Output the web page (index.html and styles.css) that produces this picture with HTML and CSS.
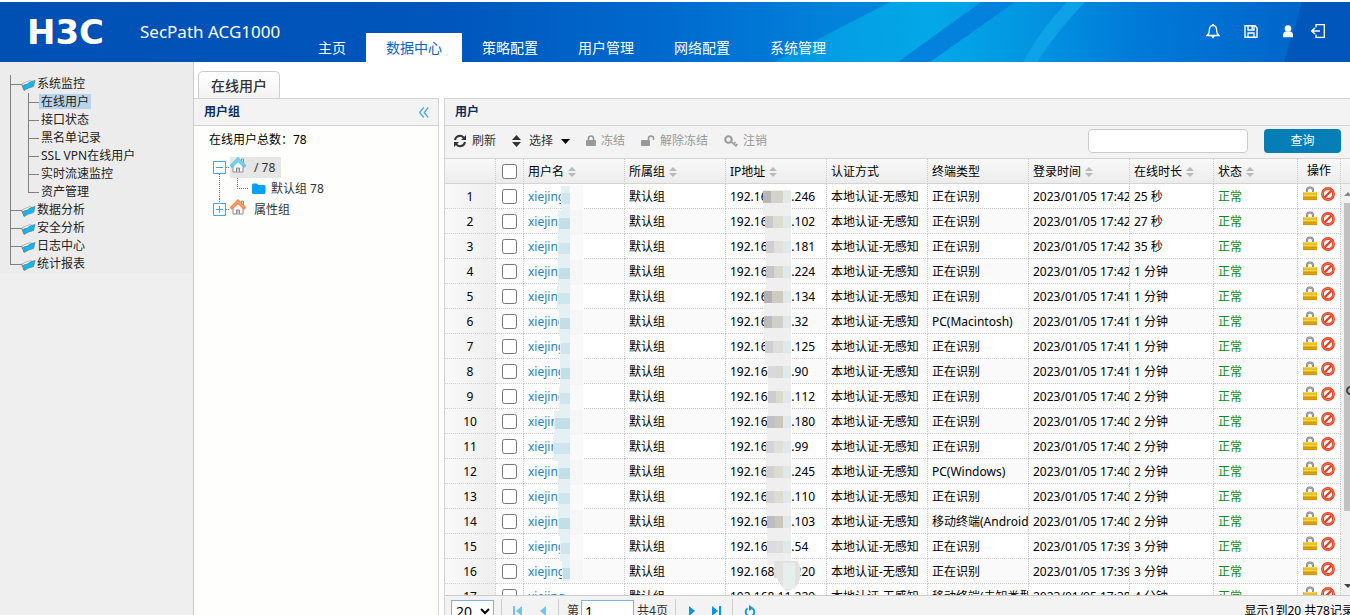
FILE: index.html
```html
<!DOCTYPE html>
<html lang="zh">
<head>
    <meta charset="UTF-8">
    <meta name="viewport" content="width=device-width, initial-scale=1.0">
    <title>SecPath ACG1000</title>
    <link rel="stylesheet" href="styles.css">
</head>
<body>

<!-- 公用图标 -->
<svg class="defs" width="0" height="0">
    <linearGradient id="head" x1="0" x2="1" y1="0" y2="0">
        <stop offset="0" stop-color="#0050b4"/><stop offset=".33" stop-color="#0056bc"/><stop offset=".5" stop-color="#006bcf"/><stop offset=".63" stop-color="#0284dc"/><stop offset="1" stop-color="#0284dc"/>
    </linearGradient>
    <linearGradient id="light" gradientUnits="userSpaceOnUse" x1="780" x2="1290" y1="50" y2="20">
        <stop offset="0" stop-color="#0498e2"/><stop offset=".3" stop-color="#03a8e8"/><stop offset=".5" stop-color="#0394e1"/><stop offset=".7" stop-color="#007ad8"/><stop offset="1" stop-color="#0066ca"/>
    </linearGradient>
    <symbol id="i-folder" viewBox="0 0 15 13">
        <path d="M0.500 6L9 2.500l2 1-8 5z" fill="#fff" stroke="#9aa5ab" stroke-width=".8"/>
        <path d="M0.500 6L3 12" stroke="#777"/>
        <path d="M2.500 7l4-1 1.500-1.500L14 2.500l-1.500 6-5 1.500L3 12.500z" fill="#10b8f0" stroke="#5b8794" stroke-width=".8"/>
    </symbol>
    <symbol id="i-home" viewBox="0 0 16 16">
        <path d="M3 8v7h10V8L8 3z" fill="#fff" stroke="#8c8c8c"/>
        <path d="M6.500 15v-4h3v4" fill="#ccc" stroke="#8c8c8c"/>
        <path d="M11.500 4V2h2v4" fill="#fff" stroke="#8c8c8c"/>
        <path d="M2 8.500l6-6 6 6" fill="none" stroke="currentColor" stroke-width="3.600" stroke-linecap="square"/>
        <path d="M2 8.500l6-6 6 6" fill="none" stroke="#fff" stroke-opacity=".4" stroke-width="1"/>
    </symbol>
    <symbol id="i-lock" viewBox="0 0 14 15">
        <path d="M4 8V4.500a3 3 0 0 1 6 0V8" fill="none" stroke="#777" stroke-width="2"/>
        <path d="M4 7V4.500a3 3 0 0 1 6 0V7" fill="none" stroke="#ccc" stroke-width=".7"/>
        <path d="M0 6h14v8H0z" fill="#f5c623"/>
        <path d="M0 11h14v3H0z" fill="#dfa30a"/>
        <path d="M1 7h12M1 9h12" stroke="#ffe96b"/>
        <path d="M0 8h14M0 11h14M0 13.700h14" stroke="#bd8a12" stroke-width=".6"/>
    </symbol>
    <symbol id="i-ban" viewBox="0 0 14 14">
        <circle cx="7" cy="7" r="5.500" fill="#fff" stroke="#e8391c" stroke-width="2.800"/>
        <path d="M3.500 10.500l7-7" stroke="#e8391c" stroke-width="2.200"/>
        <circle cx="7" cy="7" r="5.500" fill="none" stroke="#ff8a70" stroke-width=".8"/>
    </symbol>
    <symbol id="i-sort" viewBox="0 0 8 10">
        <path d="M0 4l4-4 4 4zM0 6h8l-4 4z" fill="#b9b9b9"/>
    </symbol>
</svg>

<header class="topbar">
    <svg class="topbar-bg" viewBox="0 0 1350 60" preserveAspectRatio="none">
        <path d="M0 0h1350v60H0z" fill="url(#head)"/>
        <path d="M774 60L890 0h460v60z" fill="url(#light)"/>
        <path d="M898 60L981 0h34L930 60z" fill="#0282dc"/>
        <path d="M1023 60Q1040 28 1067 0h18Q1058 28 1037 60z" fill="#12a6ea" fill-opacity=".8"/>
        <path d="M1284 60L1302 0h48v60z" fill="#0056bb"/>
    </svg>
    <a class="logo" href="#">H3C</a>
    <span class="product">SecPath ACG1000</span>
    <nav class="main-nav">
        <a href="#">主页</a>
        <a href="#" class="active">数据中心</a>
        <a href="#">策略配置</a>
        <a href="#">用户管理</a>
        <a href="#">网络配置</a>
        <a href="#">系统管理</a>
    </nav>
    <div class="tools">
        <button aria-label="告警"><svg width="14" height="15" viewBox="0 0 14 15"><path d="M7 1.500c-3 0-3.700 2.500-3.700 5.500 0 2.500-1 3.500-2.300 4.500h12c-1.300-1-2.300-2-2.300-4.500 0-3-.7-5.500-3.700-5.500z" fill="none" stroke="#fff" stroke-width="1.300"/><path d="M5 12h4l-2 2.500zM6 0h2v2H6z" fill="#fff"/></svg></button>
        <button aria-label="保存"><svg width="14" height="15" viewBox="0 0 14 15"><path d="M1 1.700h10l2 2v9.600H1z" fill="none" stroke="#fff" stroke-width="1.400"/><path d="M4 2v4h6V2M4 13V9h6v4" fill="none" stroke="#fff" stroke-width="1.300"/><path d="M7.500 2h1.500v3H7.500z" fill="#fff"/></svg></button>
        <button aria-label="用户"><svg width="12" height="15" viewBox="0 0 12 15"><circle cx="6" cy="4.500" r="3.300" fill="#fff"/><path d="M1 13.300V11c0-2 1.500-3.500 3-3.500h4c1.500 0 3 1.500 3 3.500v2.300z" fill="#fff"/></svg></button>
        <button aria-label="退出"><svg width="16" height="16" viewBox="0 0 16 16"><path d="M6 4.500V1.700h8.300v12.600H6v-2.800" fill="none" stroke="#fff" stroke-width="1.300"/><path d="M10 8H2M5 5L1.800 8 5 11" fill="none" stroke="#fff" stroke-width="1.600"/></svg></button>
    </div>
</header>

<div class="layout">
    <aside class="sidebar">
        <ul class="menu">
            <li><a href="#"><svg width="15" height="13"><use href="#i-folder"/></svg>系统监控</a>
                <ul class="submenu">
                    <li><a href="#" class="selected">在线用户</a></li>
                    <li><a href="#">接口状态</a></li>
                    <li><a href="#">黑名单记录</a></li>
                    <li><a href="#">SSL VPN在线用户</a></li>
                    <li><a href="#">实时流速监控</a></li>
                    <li><a href="#">资产管理</a></li>
                </ul>
            </li>
            <li><a href="#"><svg width="15" height="13"><use href="#i-folder"/></svg>数据分析</a></li>
            <li><a href="#"><svg width="15" height="13"><use href="#i-folder"/></svg>安全分析</a></li>
            <li><a href="#"><svg width="15" height="13"><use href="#i-folder"/></svg>日志中心</a></li>
            <li><a href="#"><svg width="15" height="13"><use href="#i-folder"/></svg>统计报表</a></li>
        </ul>
    </aside>

    <main class="main">
        <div class="tabs"><a href="#" class="tab">在线用户</a></div>
        <div class="panels">
            <section class="groups">
                <div class="panel-title">用户组
                    <button class="collapse" aria-label="收起"><svg width="10" height="11" viewBox="0 0 10 11"><path d="M4.700 0.500l-4 5 4 5M9.200 0.500l-4 5 4 5" fill="none" stroke="#4aaee2" stroke-width="1.300"/></svg></button>
                </div>
                <p class="total">在线用户总数：78</p>
                <ul class="tree">
                    <li>
                        <svg width="17" height="21"><path d="M.5 4.500h12v12H.5zM3 10.500h7" fill="none" stroke="#3aa9e4"/><path d="M13 10.500h4M6.500 17v4" stroke="#3c8dbb" stroke-dasharray="1 1"/></svg>
                        <a href="#" class="node selected"><svg class="home-blue" width="16" height="16"><use href="#i-home"/></svg><span>/ 78</span></a>
                    </li>
                    <li>
                        <svg width="39" height="21"><path d="M6.500 0v21M24.500 0v10.500h11" fill="none" stroke="#3c8dbb" stroke-dasharray="1 1"/></svg>
                        <a href="#" class="node leaf"><svg width="14" height="12" viewBox="0 0 14 12"><path d="M0 2q0-1.500 1.500-1.500H5L6.500 2H12q1.500 0 1.500 1.500v6q0 1.500-1.500 1.500H1.500Q0 11 0 9.500z" fill="#06a0f5"/></svg><span>默认组 78</span></a>
                    </li>
                    <li>
                        <svg width="17" height="21"><path d="M.5 4.500h12v12H.5zM3 10.500h7M6.500 7v7" fill="none" stroke="#3aa9e4"/><path d="M13 10.500h4M6.500 0v4" stroke="#3c8dbb" stroke-dasharray="1 1"/></svg>
                        <a href="#" class="node"><svg class="home-orange" width="16" height="16"><use href="#i-home"/></svg><span>属性组</span></a>
                    </li>
                </ul>
            </section>

            <section class="users">
                <div class="panel-title">用户</div>
                <div class="toolbar">
                    <button><svg width="14" height="14" viewBox="0 0 14 14"><path d="M2 6a5 5 0 0 1 9-2M12 8a5 5 0 0 1-9 2" fill="none" stroke="#333" stroke-width="2"/><path d="M13 1v5H8zM1 13V8h5z" fill="#333"/></svg>刷新</button>
                    <button><svg width="9" height="12" viewBox="0 0 9 12"><path d="M0 5l4.500-5L9 5zM0 7h9l-4.500 5z" fill="#333"/></svg><span class="pick">选择</span><svg width="9" height="5" viewBox="0 0 9 5"><path d="M0 0h9L4.500 5z" fill="#000"/></svg></button>
                    <button disabled><svg width="10" height="12" viewBox="0 0 10 12"><path d="M2.500 6V3.500a2.500 2.500 0 0 1 5 0V6" fill="none" stroke="#999" stroke-width="1.600"/><rect y="5" width="10" height="6" rx="1" fill="#999"/></svg>冻结</button>
                    <button disabled><svg width="14" height="12" viewBox="0 0 14 12"><path d="M7.500 6V3.500a2.500 2.500 0 0 1 5 0V5" fill="none" stroke="#999" stroke-width="1.600"/><rect y="5" width="9" height="6" rx="1" fill="#999"/></svg>解除冻结</button>
                    <button disabled><svg width="14" height="13" viewBox="0 0 14 13"><circle cx="4.500" cy="4.500" r="3.300" fill="none" stroke="#999" stroke-width="2"/><path d="M7 6.500l5.500 5M9.500 9l2-2M11.500 11l2-2" stroke="#999" stroke-width="1.600"/></svg>注销</button>
                    <input type="text" class="search" aria-label="查询内容">
                    <button class="search-btn">查询</button>
                </div>

                <div class="grid">
                    <table>
                        <colgroup>
                            <col class="c-num"><col class="c-check"><col class="c-text"><col class="c-text"><col class="c-text"><col class="c-text"><col class="c-text"><col class="c-text"><col class="c-short"><col class="c-short"><col class="c-op"><col>
                        </colgroup>
                        <thead>
                            <tr>
                                <th></th>
                                <th><input type="checkbox" aria-label="全选"></th>
                                <th>用户名<svg width="8" height="10"><use href="#i-sort"/></svg></th>
                                <th>所属组<svg width="8" height="10"><use href="#i-sort"/></svg></th>
                                <th>IP地址<svg width="8" height="10"><use href="#i-sort"/></svg></th>
                                <th>认证方式</th>
                                <th>终端类型</th>
                                <th>登录时间<svg width="8" height="10"><use href="#i-sort"/></svg></th>
                                <th>在线时长<svg width="8" height="10"><use href="#i-sort"/></svg></th>
                                <th>状态<svg width="8" height="10"><use href="#i-sort"/></svg></th>
                                <th class="op">操作</th>
                                <th></th>
                            </tr>
                        </thead>
                        <tbody id="rows"></tbody>
                    </table>
                    <!-- 用户名和IP打码 -->
                    <svg class="mask" id="mask" width="400" height="420"></svg>
                    <div class="scrollbar">
                        <svg width="9" height="19" viewBox="0 0 9 19"><path d="M3 12l4-4 4 4z" fill="#888"/></svg>
                        <div class="thumb"></div>
                        <svg width="9" height="16" viewBox="0 0 9 16"><path d="M3 5h8l-4 4z" fill="#444"/></svg>
                    </div>
                    <span class="handle"></span>
                </div>

                <div class="pager">
                    <div class="pager-row">
                        <select aria-label="每页条数"><option>20</option></select>
                        <i></i>
                        <button disabled aria-label="首页"><svg width="9" height="10" viewBox="0 0 9 10"><path d="M0 0h2v10H0zM9 0v10L3 5z" fill="#72c3f0"/></svg></button>
                        <button disabled aria-label="上一页"><svg width="9" height="10" viewBox="0 0 9 10"><path d="M8 0v10L2 5z" fill="#72c3f0"/></svg></button>
                        <i></i>
                        <label for="page">第</label><input type="text" id="page" value="1"><span>共4页</span>
                        <i></i>
                        <button aria-label="下一页"><svg width="9" height="10" viewBox="0 0 9 10"><path d="M2 0v10l6-5z" fill="#0596e6"/></svg></button>
                        <button aria-label="末页"><svg width="9" height="10" viewBox="0 0 9 10"><path d="M7 0h2v10H7zM0 0v10l6-5z" fill="#0596e6"/></svg></button>
                        <i></i>
                        <button aria-label="刷新"><svg width="12" height="13" viewBox="0 0 12 13"><path d="M3.500 3.500a4.300 4.300 0 1 0 5 0" fill="none" stroke="#0596e6" stroke-width="1.800"/><path d="M5 0l4.500 3L5 6z" fill="#0596e6"/></svg></button>
                        <span class="info">显示1到20 共78记录</span>
                    </div>
                </div>
            </section>
        </div>
    </main>
</div>

<script src="script.js"></script>
</body>
</html>
```
FILE: styles.css
```css
* {
    box-sizing: border-box;
}
html, body {
    height: 100%;
    overflow: hidden;
}
body {
    margin: 0;
    padding-top: 2px;
    display: flex;
    flex-direction: column;
    background: #fff;
    font: 12px/18px "Noto Sans", "Noto Sans CJK SC", sans-serif;
    color: #000;
}
a {
    color: inherit;
    text-decoration: none;
}
ul {
    list-style: none;
    margin: 0;
    padding: 0;
}
button, input, select {
    font: inherit;
    color: inherit;
}
button {
    border: none;
    background: none;
    padding: 0;
    display: flex;
    align-items: center;
}
svg {
    flex: none;
}
.defs {
    position: absolute;
}

/* 顶部 */
.topbar {
    position: relative;
    z-index: 0;
    flex: 0 0 60px;
    display: flex;
    color: #fff;
    background: #0050b4;
}
.topbar-bg {
    position: absolute;
    width: 100%;
    height: 100%;
    z-index: -1;
}
.logo {
    width: 113px;
    margin-left: 27px;
    font: bold 34px/60px "DejaVu Sans", sans-serif;
}
.product {
    width: 158px;
    font-size: 17px;
    line-height: 60px;
}
.main-nav {
    display: flex;
    align-items: flex-end;
    font-size: 14px;
}
.main-nav a {
    padding: 0 20px;
    height: 29px;
    line-height: 29px;
}
.main-nav a.active {
    background: #fff;
    color: #0d62cb;
}
.tools {
    display: flex;
    gap: 24px;
    margin-left: auto;
    padding: 0 24px 2px 0;
}
.tools button:last-child {
    margin-left: -8px;
}

/* 左侧菜单 */
.layout {
    flex: 1;
    display: flex;
    min-height: 0;
}
.sidebar {
    flex: 0 0 194px;
    background: #efefef;
    border-right: 1px solid #ccc;
    color: #222;
}
.menu {
    padding: 13px 0 0 10px;
    background: #ececec;
}
.menu > li {
    background: linear-gradient(#808080, #808080) 0 0 / 1px 100% no-repeat,
                linear-gradient(#808080, #808080) 0 9px / 11px 1px no-repeat;
}
.menu > li:last-child {
    background-size: 1px 10px, 11px 1px;
}
.menu > li > a {
    display: flex;
    align-items: center;
    gap: 1px;
    height: 18px;
    padding-left: 11px;
}
.submenu {
    padding-left: 18px;
}
.submenu li {
    height: 18px;
    padding-left: 11px;
    background: linear-gradient(#808080, #808080) 0 0 / 1px 100% no-repeat,
                linear-gradient(#808080, #808080) 0 9px / 11px 1px no-repeat;
}
.submenu li:last-child {
    background-size: 1px 10px, 11px 1px;
}
.submenu a {
    display: inline-block;
    height: 15px;
    line-height: 15px;
    margin-top: 1px;
    padding: 0 2px;
    vertical-align: top;
}
.submenu .selected {
    background: #b9d3ec;
}

/* 标签 */
.main {
    flex: 1;
    min-width: 0;
    display: flex;
    flex-direction: column;
}
.tabs {
    display: flex;
    align-items: flex-end;
    height: 36px;
    padding-left: 4px;
}
.tab {
    height: 27px;
    padding: 0 12px;
    border: 1px solid #ccc;
    border-bottom: none;
    border-radius: 5px 5px 0 0;
    background: linear-gradient(#fff, #f3f3f3);
    font-size: 14px;
    line-height: 28px;
    font-weight: 500;
    color: #333;
}
.panels {
    flex: 1;
    display: flex;
    gap: 5px;
    min-height: 0;
}
.panel-title {
    display: flex;
    align-items: center;
    justify-content: space-between;
    height: 28px;
    padding: 0 9px 0 10px;
    background: #f3f3f3;
    border: solid #d4d4d4;
    border-width: 1px 0;
    font-weight: bold;
    color: #0e2d5f;
}
.groups {
    flex: 0 0 245px;
    border-right: 1px solid #d4d4d4;
    background: #fefffd;
}
.total {
    margin: 5px 15px 8px;
}
.tree {
    padding-left: 19px;
    color: #333;
}
.tree li {
    display: flex;
    height: 21px;
}
.node {
    display: flex;
    gap: 8px;
    height: 21px;
    padding-right: 6px;
    line-height: 21px;
}
.node.selected {
    background: #e6e6e6;
}
.leaf {
    gap: 5px;
    align-items: center;
}
.home-blue {
    color: #5cc8ee;
}
.home-orange {
    color: #f58a4b;
}

/* 用户列表 */
.users {
    flex: 1;
    min-width: 0;
    display: flex;
    flex-direction: column;
    border-left: 1px solid #d4d4d4;
}
.toolbar {
    display: flex;
    align-items: center;
    gap: 16px;
    height: 32px;
    padding: 0 9px 2px 8px;
    background: #f3f3f3;
    color: #333;
}
.toolbar button {
    gap: 5px;
}
.toolbar button:disabled {
    color: #999;
}
.pick {
    padding: 0 3px;
}
.search {
    width: 160px;
    height: 24px;
    margin-left: auto;
    border: 1px solid #ccc;
    border-radius: 4px;
    background: #fff;
}
.toolbar .search-btn {
    width: 77px;
    height: 24px;
    justify-content: center;
    border-radius: 4px;
    background: #057eb8;
    color: #fff;
}
.grid {
    position: relative;
    flex: 1;
    min-height: 0;
    overflow: hidden;
    border-top: 1px solid #d4d4d4;
}
table {
    width: 100%;
    table-layout: fixed;
    border-collapse: separate;
    border-spacing: 0;
}
.c-num {
    width: 51px;
}
.c-check {
    width: 28px;
}
.c-text {
    width: 101px;
}
.c-short {
    width: 84px;
}
.c-op {
    width: 43px;
}
th, td {
    height: 25px;
    padding: 1px 0 0 4px;
    border: dotted #ccc;
    border-width: 0 1px 1px 0;
    font-weight: normal;
    text-align: left;
    white-space: nowrap;
    overflow: hidden;
}
th {
    background: linear-gradient(#f9f9f9, #ececec);
    border-bottom: 1px solid #d4d4d4;
}
th:last-child, td:last-child {
    border-right: none;
    padding: 0;
}
td:last-child {
    border-bottom: none;
    background: #f3f3f3;
}
th svg {
    margin-left: 4px;
    vertical-align: -1px;
}
tbody tr:nth-child(even) {
    background: #fafafa;
}
.num {
    padding: 1px 0 0;
    text-align: center;
    background: linear-gradient(to right, #f9f9f9, #efefef);
}
.op {
    padding: 0;
    text-align: center;
}
.op button {
    display: inline-block;
    height: 20px;
    margin: 0 2px;
    vertical-align: top;
}
input[type="checkbox"] {
    width: 15px;
    height: 15px;
    margin: 0 0 2px 2px;
    vertical-align: middle;
}
.name {
    color: #1f82b8;
}
.ok {
    color: #0a8a1c;
}
.mask {
    position: absolute;
    left: 0;
    top: 25px;
}
.scrollbar {
    position: absolute;
    right: 0;
    top: 25px;
    bottom: 0;
    width: 9px;
    display: flex;
    flex-direction: column;
    justify-content: space-between;
    background: #f1f1f1;
}
.thumb {
    flex: 0 0 75%;
    margin: 0 0 auto 3px;
    background: #c1c1c1;
}
.handle {
    position: absolute;
    right: -5px;
    top: 52%;
    width: 9px;
    height: 9px;
    border: 2px solid #444;
    border-radius: 50%;
}

/* 分页 */
.pager {
    flex: 0 0 20px;
    overflow: hidden;
    background: #f3f3f3;
    border-top: 1px solid #ccc;
    color: #333;
}
.pager-row {
    display: flex;
    align-items: center;
    height: 30px;
    padding-left: 6px;
    white-space: nowrap;
}
.pager select {
    width: 43px;
    height: 22px;
    border: 1px solid #7eb0e5;
    background: #fff;
    font-size: 14px;
    line-height: 18px;
    color: #000;
}
.pager i {
    width: 1px;
    height: 24px;
    margin: 0 8px 0 7px;
    background: #ccc;
}
.pager button {
    height: 24px;
    padding: 0 3px;
    margin-right: 8px;
}
.pager button + i {
    margin-left: 0;
}
.pager button + button {
    margin-left: 2px;
}
.pager input {
    width: 53px;
    height: 22px;
    margin: 0 3px 0 2px;
    padding: 0 3px;
    border: 1px solid #7eb0e5;
    background: #fff;
    font-size: 14px;
    color: #000;
}
.pager .info {
    margin: 0 -4px 0 auto;
    color: #000;
}
```
FILE: script.js
```js
// 在线用户：IP末段、终端类型、登录时间、在线时长
const users = [
    ["11.246", "正在识别", "17:42", "25 秒"],
    ["11.102", "正在识别", "17:42", "27 秒"],
    ["11.181", "正在识别", "17:42", "35 秒"],
    ["11.224", "正在识别", "17:42", "1 分钟"],
    ["11.134", "正在识别", "17:41", "1 分钟"],
    ["11.32", "PC(Macintosh)", "17:41", "1 分钟"],
    ["11.125", "正在识别", "17:41", "1 分钟"],
    ["11.90", "正在识别", "17:41", "1 分钟"],
    ["11.112", "正在识别", "17:40", "2 分钟"],
    ["11.180", "正在识别", "17:40", "2 分钟"],
    ["11.99", "正在识别", "17:40", "2 分钟"],
    ["11.245", "PC(Windows)", "17:40", "2 分钟"],
    ["11.110", "正在识别", "17:40", "2 分钟"],
    ["11.103", "移动终端(Android)", "17:40", "2 分钟"],
    ["11.54", "正在识别", "17:39", "3 分钟"],
    ["11.220", "正在识别", "17:39", "3 分钟"],
    ["11.229", "移动终端(未知类型)", "17:38", "4 分钟"]
];

document.getElementById("rows").innerHTML = users.map((u, i) => `
    <tr>
        <td class="num">${i + 1}</td>
        <td><input type="checkbox" aria-label="选择第${i + 1}行"></td>
        <td><a href="#" class="name">xiejing</a></td>
        <td>默认组</td>
        <td>192.168.${u[0]}</td>
        <td>本地认证-无感知</td>
        <td>${u[1]}</td>
        <td>2023/01/05 ${u[2]}</td>
        <td>${u[3]}</td>
        <td class="ok">正常</td>
        <td class="op"><button aria-label="冻结"><svg width="14" height="15"><use href="#i-lock"/></svg></button><button aria-label="注销"><svg width="14" height="14"><use href="#i-ban"/></svg></button></td>
        <td></td>
    </tr>`).join("");

// 每行马赛克：用户名起点、IP起点、IP颜色
const blocks = [
    [116, 318, "#b9b7b5", "#d3d1c8"],
    [113, 320, "#c9c9cc", "#dddcd0"],
    [113, 321, "#d0d0d4", "#e2e0dc"],
    [113, 321, "#c5c5ca", "#d9d8d0"],
    [112, 319, "#b3b1b3", "#cdcbc0"],
    [114, 319, "#bcbabd", "#d0cfc8"],
    [115, 320, "#cfcfd4", "#dedddb"],
    [115, 323, "#dad9da", "#d8d7d6"],
    [114, 323, "#cfcdcc", "#dcdacd"],
    [109, 322, "#c2c0c2", "#cac8be"],
    [108, 321, "#d4d4d8", "#e0dfd8"],
    [113, 321, "#d2d2d4", "#dddcd4"],
    [113, 321, "#d4d4d6", "#dddcd0"],
    [113, 322, "#bebcbe", "#cac8be"],
    [115, 322, "#dcdbdd", "#dfdddb"],
    [117, 329, "#d9d9d6", "#dddcd4"]
];
const rect = (x, y, w, h, fill) => `<rect x="${x}" y="${y}" width="${w}" height="${h}" fill="${fill}"/>`;

document.getElementById("mask").innerHTML = blocks.map(([n, p, c1, c2], i) => {
    const y = i * 25;
    const last = i === 15;
    return rect(n, y + 2, 125 - n, last ? 20 : 25, "#e4f0f4")
        + rect(n + 1, y + 9, 124 - n, 11, i % 2 ? "#c2dfe8" : "#d0e6ee")
        + rect(125, y + 1, 13, last ? 20 : 25, i % 2 ? "#f6f6f6" : "#fafafa")
        + rect(p, y + 6, 346 - p, last ? 8 : 25, "#efeff0")
        + rect(p, y + 7, 9, 12, c1)
        + rect(p + 8, y + 7, 338 - p - 8, 12, c2)
        + rect(338, y + 7, 8, 12, "#dfe9ec");
}).join("") + `<path d="M329 377h24q4 10 2 18-4 12-14 12-8-8-12-20z" fill="#e2e2df"/><path d="M338 379h12v26h-12z" fill="#e6eeee"/>`;
```
